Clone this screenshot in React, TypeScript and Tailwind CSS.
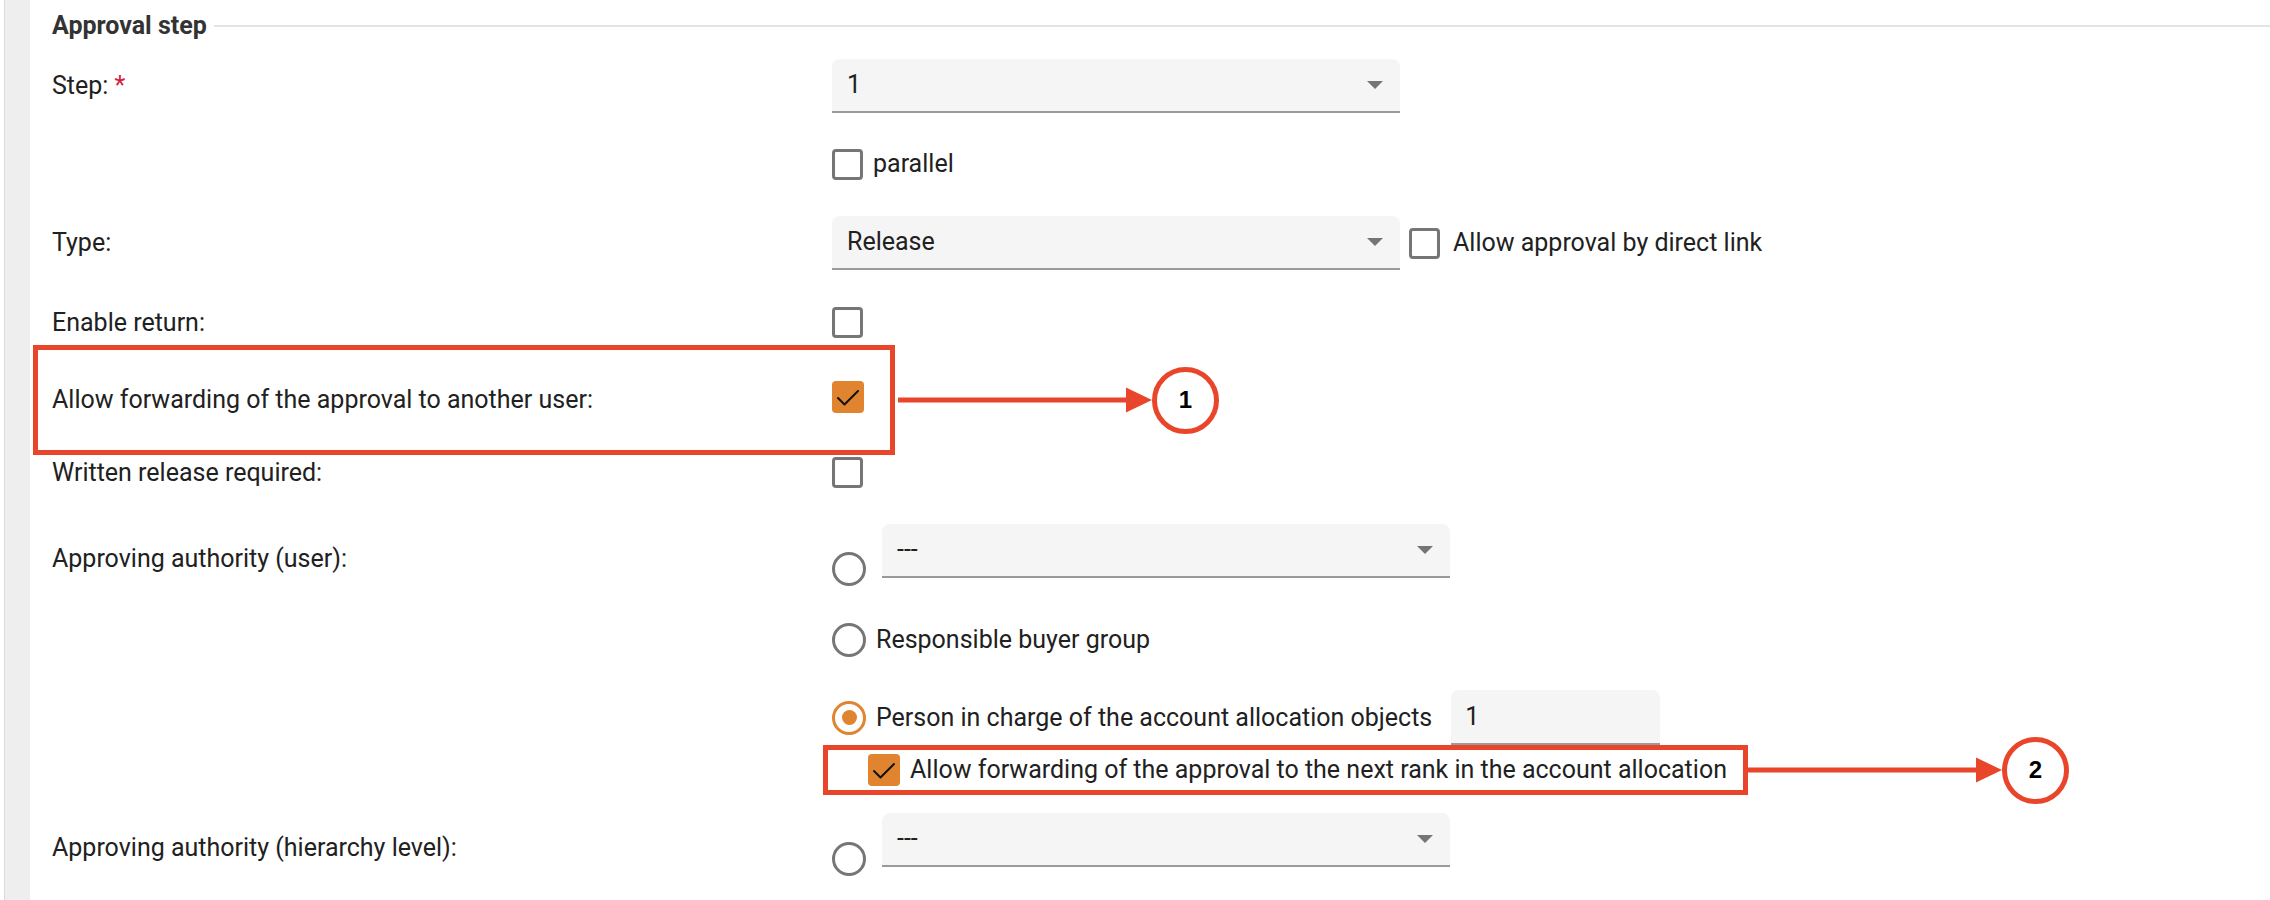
import type { ReactNode } from 'react';

const ORANGE = '#e0842f';
const RED = '#e9452a';

const Checkbox = ({ checked = false }: { checked?: boolean }) => (checked ? (
  <span className="flex h-[32px] w-[32px] shrink-0 items-center justify-center rounded-[4px] bg-[#e0842f]">
    <svg viewBox="0 0 32 32" width="32" height="32" fill="none" stroke="#111" strokeWidth="2" strokeLinecap="round" strokeLinejoin="round">
      <polyline points="6,17 12.5,23.5 26,10" />
    </svg>
  </span>
) : (
  <span className="block h-[31px] w-[31px] shrink-0 rounded-[4px] border-[3px] border-[#767676] bg-white" />
));

const Radio = ({ checked = false }: { checked?: boolean }) => (
  <span
    className={`flex h-[34px] w-[34px] shrink-0 items-center justify-center rounded-full border-[3px] ${checked ? 'border-[#e0842f]' : 'border-[#767676]'}`}
  >
    {checked && <span className="h-[15px] w-[15px] rounded-full" style={{ backgroundColor: ORANGE }} />}
  </span>
);

const Select = ({ value }: { value: string }) => (
  <div className="flex h-[54px] w-[568px] shrink-0 items-center justify-between rounded-t-[8px] border-b-2 border-[#9a9a9a] bg-[#f5f5f5] pl-[15px] pr-[17px]">
    <span>{value}</span>
    <svg width="16" height="8" viewBox="0 0 16 8">
      <polygon points="0,0 16,0 8,8" fill="#757575" />
    </svg>
  </div>
);

// red arrow pointing at a numbered circle; the circle overflows the row height
const Callout = ({ n }: { n: string }) => (
  <div className="flex h-[30px] shrink-0 items-center">
    <svg width="254" height="26" viewBox="0 0 254 26">
      <rect x="0" y="10.5" width="231" height="5" fill={RED} />
      <polygon points="228,0.5 254,13 228,25.5" fill={RED} />
    </svg>
    <div className="flex h-[67px] w-[67px] shrink-0 items-center justify-center rounded-full border-[5px] border-[#e9452a] bg-white font-['Liberation_Sans',sans-serif] text-[24px] font-bold text-black">
      {n}
    </div>
  </div>
);

const Row = ({ label, children, className = '' }: { label?: ReactNode; children: ReactNode; className?: string }) => (
  <div className={`grid grid-cols-[780px_1fr] items-center ${className}`}>
    <span>{label}</span>
    <div className="flex items-center">{children}</div>
  </div>
);

const App = () => (
  <div className="flex h-[900px] overflow-hidden bg-white font-['Roboto',sans-serif] text-[25px] leading-[30px] text-[#212121]">
    <div className="ml-[4px] w-[26px] shrink-0 border-l border-[#dadada] bg-[#eeeeee]" />
    <div className="flex min-w-0 flex-1 flex-col pl-[22px]">
      <div className="flex h-[52px] items-center">
        <h2 className="font-bold text-[#333]">Approval step</h2>
        <div className="ml-[7px] h-[2px] flex-1 bg-[#e4e4e4]" />
      </div>

      <Row className="mt-[7px]" label={<>Step: <span className="text-[#d0213b]">*</span></>}>
        <Select value="1" />
      </Row>

      <Row className="mt-[35px] h-[32px]">
        <Checkbox />
        <span className="ml-[10px]">parallel</span>
      </Row>

      <Row className="mt-[36px]" label="Type:">
        <Select value="Release" />
        <span className="ml-[9px]"><Checkbox /></span>
        <span className="ml-[13px]">Allow approval by direct link</span>
      </Row>

      <Row className="mt-[37px] h-[31px]" label="Enable return:">
        <Checkbox />
      </Row>

      <div className="mt-[7px] flex items-center">
        <div className="-ml-[19px] grid h-[110px] w-[862px] shrink-0 grid-cols-[780px_1fr] items-center border-[5px] border-[#e9452a] pl-[14px]">
          <span>Allow forwarding of the approval to another user:</span>
          <span className="mb-[6px]"><Checkbox checked /></span>
        </div>
        <div className="ml-[3px]"><Callout n="1" /></div>
      </div>

      <Row className="mt-[2px] h-[31px]" label="Written release required:">
        <Checkbox />
      </Row>

      <div className="mt-[36px] grid grid-cols-[780px_1fr] items-start">
        <span className="pt-[20px]">Approving authority (user):</span>
        <div className="flex items-start">
          <span className="mt-[28px]"><Radio /></span>
          <span className="ml-[16px]"><Select value="---" /></span>
        </div>
      </div>

      <Row className="mt-[36px] h-[35px]">
        <Radio />
        <span className="ml-[10px]">Responsible buyer group</span>
      </Row>

      <Row className="mt-[33px] h-[55px]">
        <Radio checked />
        <span className="ml-[10px]">Person in charge of the account allocation objects</span>
        <div className="ml-[19px] flex h-[55px] w-[209px] items-center rounded-t-[8px] border-b-2 border-[#9a9a9a] bg-[#f5f5f5] pl-[14px]">
          1
        </div>
      </Row>

      <Row className="h-[50px]">
        <div className="-ml-[9px] flex h-[50px] shrink-0 items-center gap-[10px] border-[5px] border-[#e9452a] pl-[40px] pr-[16px]">
          <Checkbox checked />
          <span className="whitespace-nowrap">Allow forwarding of the approval to the next rank in the account allocation</span>
        </div>
        <Callout n="2" />
      </Row>

      <div className="mt-[18px] grid grid-cols-[780px_1fr] items-start">
        <span className="pt-[20px]">Approving authority (hierarchy level):</span>
        <div className="flex items-start">
          <span className="mt-[29px]"><Radio /></span>
          <span className="ml-[16px]"><Select value="---" /></span>
        </div>
      </div>
    </div>
  </div>
);

export default App;
